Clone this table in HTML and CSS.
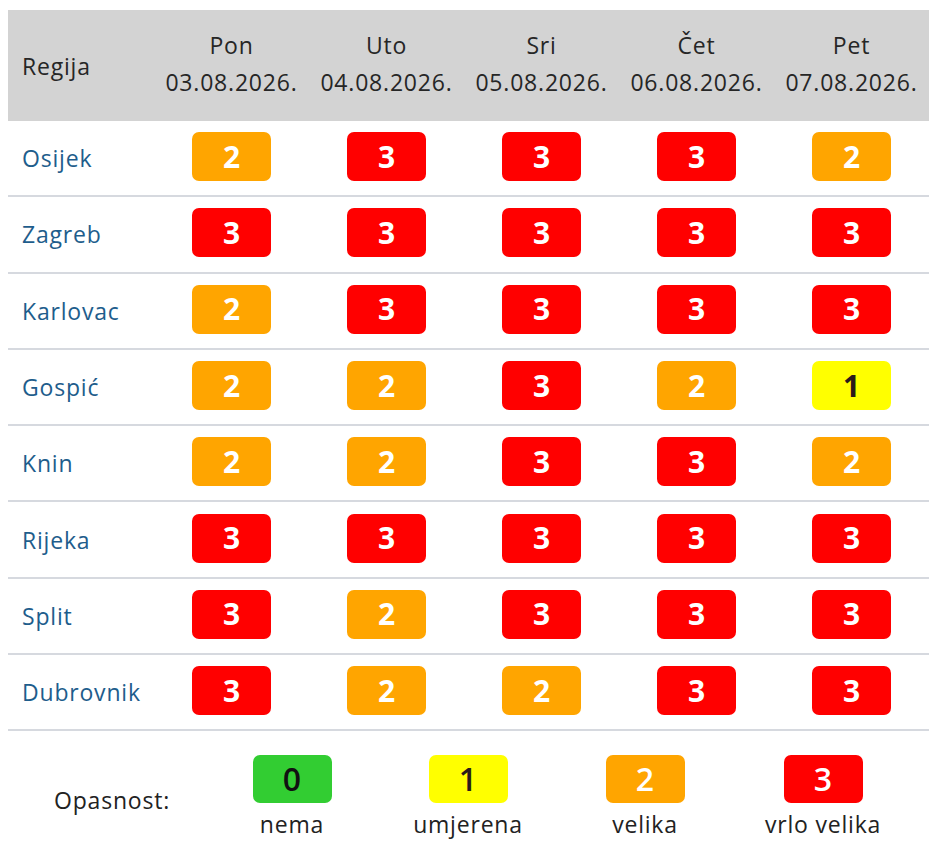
FILE: index.html
```html
<!DOCTYPE html>
<html lang="hr">
<head>
<meta charset="utf-8">
<title>Opasnost</title>
<link rel="stylesheet" href="styles.css">
</head>
<body>
<div class="wrap">
  <div class="table">
    <div class="row head">
      <div class="cell region-h">Regija</div>
      <div class="cell day"><span>Pon</span><span>03.08.2026.</span></div>
      <div class="cell day"><span>Uto</span><span>04.08.2026.</span></div>
      <div class="cell day"><span>Sri</span><span>05.08.2026.</span></div>
      <div class="cell day"><span>Čet</span><span>06.08.2026.</span></div>
      <div class="cell day"><span>Pet</span><span>07.08.2026.</span></div>
    </div>
    <div class="row">
      <div class="cell region">Osijek</div>
      <div class="cell"><span class="badge l2">2</span></div>
      <div class="cell"><span class="badge l3">3</span></div>
      <div class="cell"><span class="badge l3">3</span></div>
      <div class="cell"><span class="badge l3">3</span></div>
      <div class="cell"><span class="badge l2">2</span></div>
    </div>
    <div class="row">
      <div class="cell region">Zagreb</div>
      <div class="cell"><span class="badge l3">3</span></div>
      <div class="cell"><span class="badge l3">3</span></div>
      <div class="cell"><span class="badge l3">3</span></div>
      <div class="cell"><span class="badge l3">3</span></div>
      <div class="cell"><span class="badge l3">3</span></div>
    </div>
    <div class="row">
      <div class="cell region">Karlovac</div>
      <div class="cell"><span class="badge l2">2</span></div>
      <div class="cell"><span class="badge l3">3</span></div>
      <div class="cell"><span class="badge l3">3</span></div>
      <div class="cell"><span class="badge l3">3</span></div>
      <div class="cell"><span class="badge l3">3</span></div>
    </div>
    <div class="row">
      <div class="cell region">Gospić</div>
      <div class="cell"><span class="badge l2">2</span></div>
      <div class="cell"><span class="badge l2">2</span></div>
      <div class="cell"><span class="badge l3">3</span></div>
      <div class="cell"><span class="badge l2">2</span></div>
      <div class="cell"><span class="badge l1">1</span></div>
    </div>
    <div class="row">
      <div class="cell region">Knin</div>
      <div class="cell"><span class="badge l2">2</span></div>
      <div class="cell"><span class="badge l2">2</span></div>
      <div class="cell"><span class="badge l3">3</span></div>
      <div class="cell"><span class="badge l3">3</span></div>
      <div class="cell"><span class="badge l2">2</span></div>
    </div>
    <div class="row">
      <div class="cell region">Rijeka</div>
      <div class="cell"><span class="badge l3">3</span></div>
      <div class="cell"><span class="badge l3">3</span></div>
      <div class="cell"><span class="badge l3">3</span></div>
      <div class="cell"><span class="badge l3">3</span></div>
      <div class="cell"><span class="badge l3">3</span></div>
    </div>
    <div class="row">
      <div class="cell region">Split</div>
      <div class="cell"><span class="badge l3">3</span></div>
      <div class="cell"><span class="badge l2">2</span></div>
      <div class="cell"><span class="badge l3">3</span></div>
      <div class="cell"><span class="badge l3">3</span></div>
      <div class="cell"><span class="badge l3">3</span></div>
    </div>
    <div class="row">
      <div class="cell region">Dubrovnik</div>
      <div class="cell"><span class="badge l3">3</span></div>
      <div class="cell"><span class="badge l2">2</span></div>
      <div class="cell"><span class="badge l2">2</span></div>
      <div class="cell"><span class="badge l3">3</span></div>
      <div class="cell"><span class="badge l3">3</span></div>
    </div>
  </div>
  <div class="legend">
    <div class="legend-title">Opasnost:</div>
    <div class="legend-item"><span class="badge small l0">0</span><span class="legend-label">nema</span></div>
    <div class="legend-item"><span class="badge small l1">1</span><span class="legend-label">umjerena</span></div>
    <div class="legend-item"><span class="badge small l2">2</span><span class="legend-label">velika</span></div>
    <div class="legend-item"><span class="badge small l3">3</span><span class="legend-label">vrlo velika</span></div>
  </div>
</div>
</body>
</html>
```
FILE: styles.css
```css
html, body {
  margin: 0;
  padding: 0;
  background: #ffffff;
}
body {
  font-family: "Open Sans", "Noto Sans", sans-serif;
  font-size: 23px;
  color: #222222;
  letter-spacing: 0.8px;
}
.wrap {
  padding: 10px 0 0 8px;
  width: 921px;
}
.table {
  display: flex;
  flex-direction: column;
}
.row {
  display: grid;
  grid-template-columns: 146px repeat(5, 155px);
  height: 76.3px;
  border-bottom: 2px solid #d6d9df;
  box-sizing: border-box;
}
.row.head {
  height: 111px;
  background: #d3d3d3;
  border-bottom: 0;
  color: #262626;
}
.cell {
  display: flex;
  align-items: center;
  justify-content: center;
}
.region-h,
.region {
  justify-content: flex-start;
  padding-left: 14px;
}
.region {
  color: #1e5d8c;
}
.day {
  flex-direction: column;
  line-height: 37px;
  padding-bottom: 4px;
}
.badge {
  display: flex;
  align-items: center;
  justify-content: center;
  width: 79px;
  height: 49px;
  border-radius: 7px;
  font-weight: 700;
  font-size: 30px;
  line-height: 1;
  color: #ffffff;
  letter-spacing: 0;
  margin-top: -3px;
}
.l0 { background: #32cd32; color: #111111; }
.l1 { background: #ffff00; color: #2a1a1a; }
.l2 { background: #ffa500; }
.l3 { background: #ff0000; }
.badge.small {
  height: 48px;
  font-size: 32px;
  font-weight: 600;
  margin-top: 0;
}
.legend {
  display: grid;
  grid-template-columns: 196px 176px 176px 178px 178px;
  padding-top: 24px;
}
.legend-title {
  display: flex;
  align-items: center;
  padding-left: 46px;
  padding-top: 6px;
  color: #222222;
}
.legend-item {
  display: flex;
  flex-direction: column;
  align-items: center;
  gap: 6px;
}
.legend-label {
  line-height: 30px;
}
```
